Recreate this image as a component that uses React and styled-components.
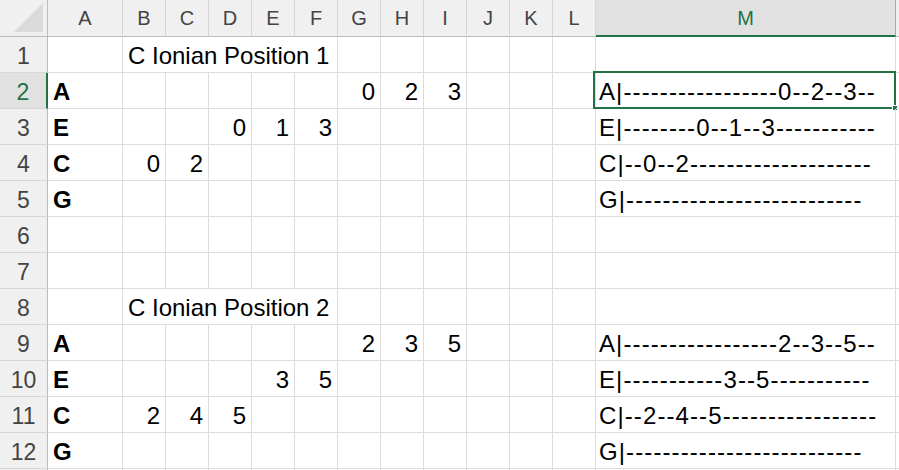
import React from 'react'
import styled, { createGlobalStyle } from 'styled-components'

const green = '#217346'
const gridLine = '#dcdcdc'

const GlobalStyle = createGlobalStyle`
  html, body {
    margin: 0;
    padding: 0;
    background: #ffffff;
    overflow: hidden;
  }
  body {
    font-family: "Liberation Sans", Arial, sans-serif;
  }
`

const COLS = ['A', 'B', 'C', 'D', 'E', 'F', 'G', 'H', 'I', 'J', 'K', 'L', 'M', 'N']
const FRET_COLS = ['B', 'C', 'D', 'E', 'F', 'G', 'H', 'I']

const Sheet = styled.div`
  display: grid;
  grid-template-columns: 48px 75px repeat(11, 43px) 300px 60px;
  grid-template-rows: 37px repeat(12, 36px) 2px;
  width: 899px;
  height: 470px;
  overflow: hidden;
  color: #000;
`

const Corner = styled.div`
  box-sizing: border-box;
  background: #f0f0f0;
  border-right: 1px solid #bcbcbc;
  border-bottom: 1px solid #bcbcbc;
  display: flex;
  align-items: flex-end;
  justify-content: flex-end;
  padding: 0 3px 3px 0;
`

const ColHead = styled.div`
  box-sizing: border-box;
  background: ${p => (p.$selected ? '#e1e1e1' : '#f0f0f0')};
  border-right: 1px solid ${p => (p.$selected ? '#a9a9a9' : '#d6d6d6')};
  border-bottom: ${p => (p.$selected ? `2px solid ${green}` : '1px solid #bcbcbc')};
  color: ${p => (p.$selected ? green : '#444444')};
  font-size: 20px;
  display: flex;
  align-items: center;
  justify-content: center;
  padding-top: ${p => (p.$selected ? '1px' : '0')};
`

const RowHead = styled.div`
  box-sizing: border-box;
  background: ${p => (p.$selected ? '#e1e1e1' : '#f0f0f0')};
  border-right: ${p => (p.$selected ? `2px solid ${green}` : '1px solid #bcbcbc')};
  border-bottom: 1px solid #d6d6d6;
  color: ${p => (p.$selected ? green : '#444444')};
  font-size: 23px;
  display: flex;
  align-items: flex-end;
  justify-content: center;
  padding-bottom: 4px;
  line-height: 24px;
`

const Cell = styled.div`
  box-sizing: border-box;
  position: relative;
  grid-column: span ${p => p.$span || 1};
  border-right: 1px solid ${gridLine};
  border-bottom: 1px solid ${gridLine};
  display: flex;
  align-items: flex-end;
  justify-content: ${p => (p.$align === 'right' ? 'flex-end' : 'flex-start')};
  padding: 0 ${p => (p.$align === 'right' ? '5px' : '3px')} 4px ${p => (p.$tab ? '3px' : '5px')};
  font-size: 24px;
  line-height: 24px;
  font-weight: ${p => (p.$bold ? 700 : 400)};
  letter-spacing: ${p => (p.$tab ? '1.1px' : '0')};
  white-space: nowrap;
`

const Selection = styled.div`
  position: absolute;
  left: -3px;
  top: -2px;
  width: 303px;
  height: 38px;
  box-sizing: border-box;
  border: 2px solid ${green};
  pointer-events: none;
`

const FillHandle = styled.div`
  position: absolute;
  right: -4px;
  bottom: -4px;
  width: 6px;
  height: 6px;
  box-sizing: border-box;
  background: ${green};
  border: 1px solid #ffffff;
`

const positions = [
  {
    title: 'C Ionian Position 1',
    strings: [
      { name: 'A', frets: { G: 0, H: 2, I: 3 } },
      { name: 'E', frets: { D: 0, E: 1, F: 3 } },
      { name: 'C', frets: { B: 0, C: 2 } },
      { name: 'G', frets: {} },
    ],
  },
  {
    title: 'C Ionian Position 2',
    strings: [
      { name: 'A', frets: { G: 2, H: 3, I: 5 } },
      { name: 'E', frets: { E: 3, F: 5 } },
      { name: 'C', frets: { B: 2, C: 4, D: 5 } },
      { name: 'G', frets: {} },
    ],
  },
]

// same thing the sheet formula does: "--x" per fret column, "---" when empty
const tabLine = s =>
  `${s.name}|` + FRET_COLS.map(c => (s.frets[c] !== undefined ? `--${s.frets[c]}` : '---')).join('') + '--'

const buildRows = () => {
  const rows = []
  positions.forEach((pos, i) => {
    rows.push({ B: { value: pos.title, span: 5 } })
    pos.strings.forEach(s => {
      const row = { A: { value: s.name, bold: true }, M: { value: tabLine(s), tab: true } }
      Object.entries(s.frets).forEach(([c, v]) => {
        row[c] = { value: v, align: 'right' }
      })
      rows.push(row)
    })
    if (i === 0) rows.push({}, {})
  })
  return rows
}

const SheetRow = ({ num, data, selected }) => {
  const cells = []
  let skip = 0
  COLS.forEach(col => {
    if (skip > 0) {
      skip--
      return
    }
    const c = data[col]
    if (c && c.span) skip = c.span - 1
    const isActive = selected && col === 'M'
    cells.push(
      <Cell key={col} $span={c?.span} $align={c?.align} $bold={c?.bold} $tab={c?.tab}>
        {c ? c.value : ''}
        {isActive && (
          <Selection>
            <FillHandle />
          </Selection>
        )}
      </Cell>
    )
  })
  return (
    <>
      <RowHead $selected={selected}>{num}</RowHead>
      {cells}
    </>
  )
}

const CornerTriangle = () => (
  <svg width="30" height="30" viewBox="0 0 30 30">
    <polygon points="0,29 29,29 29,0" fill="#dadada" />
  </svg>
)

export default function App() {
  const rows = buildRows()
  return (
    <>
      <GlobalStyle />
      <Sheet>
        <Corner>
          <CornerTriangle />
        </Corner>
        {COLS.map(col => (
          <ColHead key={col} $selected={col === 'M'}>
            {col === 'N' ? '' : col}
          </ColHead>
        ))}
        {rows.map((r, i) => (
          <SheetRow key={i} num={i + 1} data={r} selected={i === 1} />
        ))}
        {/* sliver of row 13 at the bottom edge */}
        <SheetRow num="" data={{}} selected={false} />
      </Sheet>
    </>
  )
}
